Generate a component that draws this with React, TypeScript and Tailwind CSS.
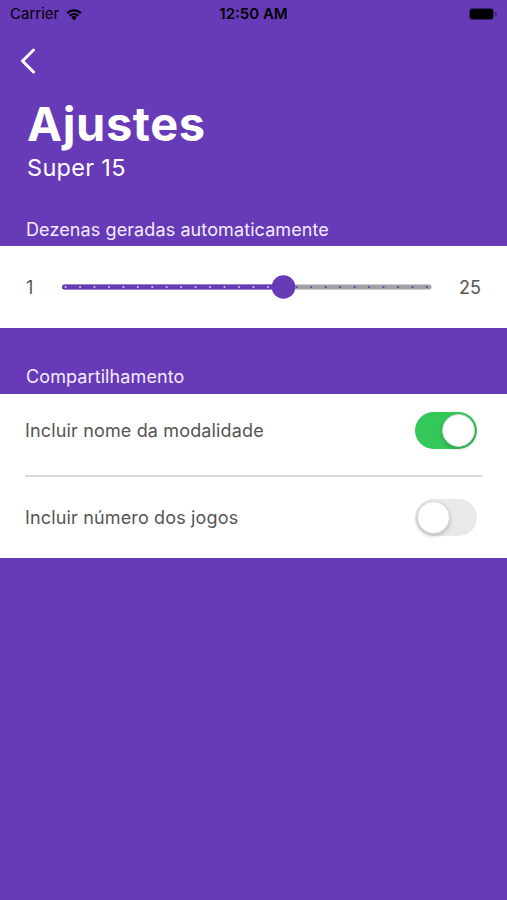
import React from "react"

const TICKS = Array.from({ length: 26 }, (_, i) => 3.6 + i * 14.45)

function StatusBar() {
    return (
        <div className="grid grid-cols-3 items-center h-[28px] px-[10px] text-black text-[15px]">
            <div className="flex items-center gap-[6px]">
                <span>Carrier</span>
                <svg width="18" height="13" viewBox="0 0 18 13">
                    <path d="M9 12.5 L6.2 9.3 A4.2 4.2 0 0 1 11.8 9.3 Z" fill="black" />
                    <path d="M3.9 6.9 A7.6 7.6 0 0 1 14.1 6.9 L12.6 8.5 A5.4 5.4 0 0 0 5.4 8.5 Z" fill="black" />
                    <path d="M1.4 4.3 A11.2 11.2 0 0 1 16.6 4.3 L15.1 5.9 A9 9 0 0 0 2.9 5.9 Z" fill="black" />
                </svg>
            </div>
            <div className="text-center font-semibold">12:50 AM</div>
            <div className="flex justify-end items-center">
                <div className="w-[25px] h-[12px] rounded-[3.5px] bg-black border border-[#3a2470]" />
                <div className="w-[1.5px] h-[4px] bg-[#3a2470] rounded-r-sm ml-[1px]" />
            </div>
        </div>
    )
}

function Slider() {
    const thumb = 221.5
    return (
        <svg width="372" height="30" viewBox="0 0 372 30">
            <line x1="2.5" y1="15" x2="367" y2="15" stroke="#a3a1a6" strokeWidth="5" strokeLinecap="round" />
            <line x1="2.5" y1="15" x2={thumb} y2="15" stroke="#673ab7" strokeWidth="5" strokeLinecap="round" />
            {TICKS.map((x, i) => (
                <circle key={i} cx={x} cy="15" r="1.1" fill={x < thumb ? "#cbbde6" : "#5b43a8"} />
            ))}
            <circle cx={thumb} cy="15" r="11.8" fill="#673ab7" />
        </svg>
    )
}

function Toggle({ on }: { on: boolean }) {
    return (
        <div
            className={
                on
                    ? "w-[62px] h-[37px] rounded-full bg-[#34c759] flex items-center justify-end p-[2px] mr-[5px]"
                    : "w-[62px] h-[37px] rounded-full bg-[#e9e9eb] flex items-center justify-start p-[2px] mr-[5px]"
            }
        >
            <div className="w-[33px] h-[33px] rounded-full bg-white shadow-[0_2px_4px_rgba(0,0,0,0.2)] border border-[#d8d8d8]" />
        </div>
    )
}

export default function App() {
    return (
        <div className="min-h-[900px] bg-[#673ab7] font-['Inter',sans-serif]">
            <StatusBar />

            <div className="px-[27px]">
                <svg width="16" height="26" viewBox="0 0 16 26" className="mt-[20px] -ml-[7px]">
                    <path d="M13.5 2 L2.5 13 L13.5 24" stroke="white" strokeWidth="3" fill="none" strokeLinecap="round" strokeLinejoin="round" />
                </svg>
                <h1 className="mt-[22px] text-[47px] leading-[55px] font-bold text-white tracking-[0.6px]">Ajustes</h1>
                <div className="mt-[3px] text-[23.5px] leading-[28px] text-white tracking-[0.3px]">Super 15</div>
            </div>

            <div className="px-[26px] pt-[36px] pb-[4px] text-[18px] leading-[24px] text-[#f3ecff] tracking-[0.1px]">
                Dezenas geradas automaticamente
            </div>
            <div className="bg-white h-[82px] flex items-center px-[26px] text-[18px] text-[#555]">
                <span className="w-[36px]">1</span>
                <Slider />
                <span className="ml-auto">25</span>
            </div>

            <div className="px-[26px] pt-[37px] pb-[5px] text-[18px] leading-[24px] text-[#f3ecff] tracking-[0.1px]">
                Compartilhamento
            </div>
            <div className="bg-white px-[25px] text-[18px] text-[#555] tracking-[0.15px]">
                <div className="h-[81px] pb-[9px] flex items-center justify-between">
                    <span>Incluir nome da modalidade</span>
                    <Toggle on={true} />
                </div>
                <div className="h-[1.5px] bg-[#d9d9d9]" />
                <div className="h-[81px] flex items-center justify-between">
                    <span>Incluir número dos jogos</span>
                    <Toggle on={false} />
                </div>
            </div>
        </div>
    )
}
